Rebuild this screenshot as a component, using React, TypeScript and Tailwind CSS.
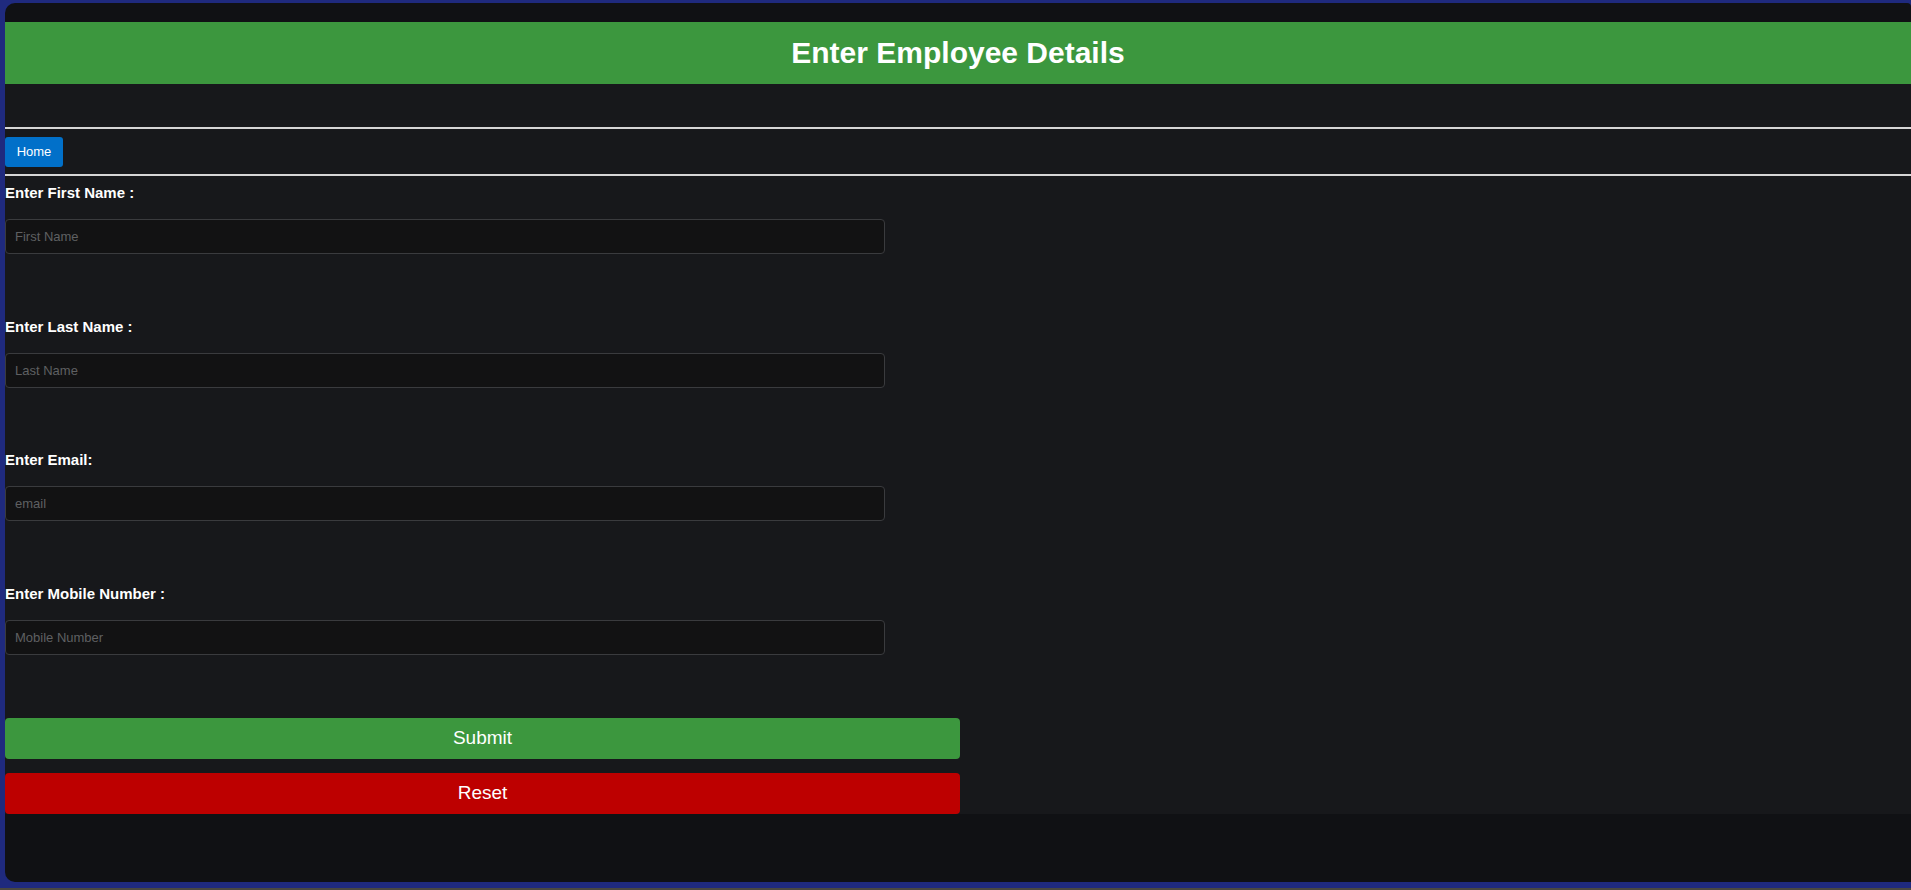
import React from "react";

const fields = [
  { label: "Enter First Name :", placeholder: "First Name" },
  { label: "Enter Last Name :", placeholder: "Last Name" },
  { label: "Enter Email:", placeholder: "email" },
  { label: "Enter Mobile Number :", placeholder: "Mobile Number" },
];

const App = () => {
  return (
    <div className="h-screen w-full bg-[#1f2a7e] flex flex-col font-['Liberation_Sans',Arial,sans-serif] overflow-hidden">
      <div className="flex flex-1 pt-[3px] pl-[5px] pb-[6px]">
        <div className="flex-1 flex flex-col bg-[#101114] rounded-l-[10px] rounded-tr-[4px] overflow-hidden">
          <div className="h-[19px] shrink-0"></div>
          <div className="h-[62px] shrink-0 bg-[#3c973e] flex items-center justify-center">
            <h1 className="text-[30px] font-bold text-white leading-none">
              Enter Employee Details
            </h1>
          </div>
          <div className="bg-[#17181b] flex flex-col">
            <div className="h-[43px]"></div>
            <div className="h-[2px] bg-[#d6d6d6]"></div>
            <div className="pt-[8px] pb-[7px]">
              <button className="h-[30px] w-[58px] rounded-[3px] bg-[#0170c9] text-white text-[13px]">
                Home
              </button>
            </div>
            <div className="h-[2px] bg-[#d6d6d6]"></div>
            <form className="flex flex-col pt-[8px]">
              {fields.map((f, i) => (
                <div key={i} className={i < fields.length - 1 ? "mb-[63.5px]" : ""}>
                  <label className="block text-white font-bold text-[15px] leading-[17px]">
                    {f.label}
                  </label>
                  <input
                    type="text"
                    placeholder={f.placeholder}
                    className="mt-[18px] block h-[35px] w-[880px] rounded-[4px] border border-[#3a3b3e] bg-[#121213] px-[9px] text-[13px] text-white placeholder:text-[#5f6062] outline-none"
                  />
                </div>
              ))}
              <button
                type="button"
                className="mt-[63px] h-[41px] w-[955px] rounded-[4px] bg-[#3c973e] text-white text-[19px]"
              >
                Submit
              </button>
              <button
                type="button"
                className="mt-[14px] h-[41px] w-[955px] rounded-[4px] bg-[#bd0000] text-white text-[19px]"
              >
                Reset
              </button>
            </form>
          </div>
        </div>
      </div>
      <div className="h-[2px] bg-[#4a4840] shrink-0"></div>
    </div>
  );
};

export default App;
